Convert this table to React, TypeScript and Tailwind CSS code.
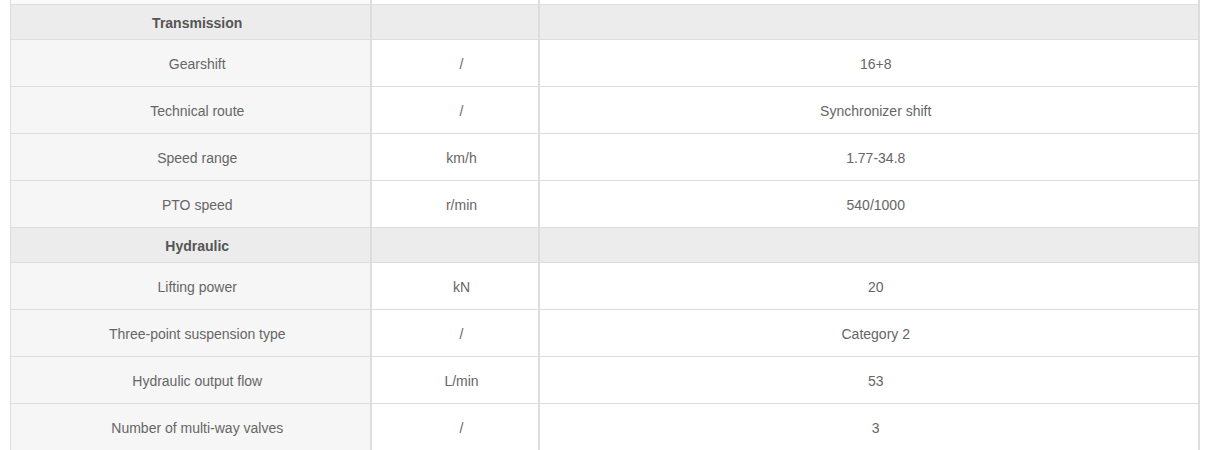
const rows: { kind: "head" | "row"; name: string; unit?: string; value?: string }[] = [
  { kind: "head", name: "Transmission" },
  { kind: "row", name: "Gearshift", unit: "/", value: "16+8" },
  { kind: "row", name: "Technical route", unit: "/", value: "Synchronizer shift" },
  { kind: "row", name: "Speed range", unit: "km/h", value: "1.77-34.8" },
  { kind: "row", name: "PTO speed", unit: "r/min", value: "540/1000" },
  { kind: "head", name: "Hydraulic" },
  { kind: "row", name: "Lifting power", unit: "kN", value: "20" },
  { kind: "row", name: "Three-point suspension type", unit: "/", value: "Category 2" },
  { kind: "row", name: "Hydraulic output flow", unit: "L/min", value: "53" },
  { kind: "row", name: "Number of multi-way valves", unit: "/", value: "3" },
];

export default function App() {
  return (
    <div className="h-[450px] overflow-hidden bg-white pl-[10px] font-['Liberation_Sans',Arial,sans-serif] text-[14px] text-[#666]">
      <table className="w-[1190px] table-fixed border-collapse">
        <colgroup>
          <col className="w-[360px]" />
          <col className="w-[168px]" />
          <col />
        </colgroup>
        <tbody>
          <tr className="h-[4px]">
            <td className="border-x border-b border-[#ddd] bg-[#fafafa] p-0" />
            <td className="border-x-2 border-b border-[#ddd] p-0" />
            <td className="border-x-2 border-b border-[#ddd] p-0" />
          </tr>
          {rows.map((r, i) =>
            r.kind === "head" ? (
              <tr key={i} className="h-[35px] bg-[#ececec]">
                <td className="border border-[#ddd] pt-[4px] pb-0 pl-[14px] pr-0 text-center font-bold text-[#555]">{r.name}</td>
                <td className="border-x-2 border-y border-[#ddd] p-0" />
                <td className="border-x-2 border-y border-[#ddd] p-0" />
              </tr>
            ) : (
              <tr key={i} className="h-[47px]">
                <td className="border border-[#ddd] bg-[#f6f6f6] pt-[4px] pb-0 pl-[14px] pr-0 text-center">{r.name}</td>
                <td className="border-x-2 border-y border-[#ddd] pt-[4px] pb-0 pl-[14px] pr-0 text-center">{r.unit}</td>
                <td className="border-x-2 border-y border-[#ddd] pt-[4px] pb-0 pl-[14px] pr-0 text-center">{r.value}</td>
              </tr>
            )
          )}
        </tbody>
      </table>
    </div>
  );
}
